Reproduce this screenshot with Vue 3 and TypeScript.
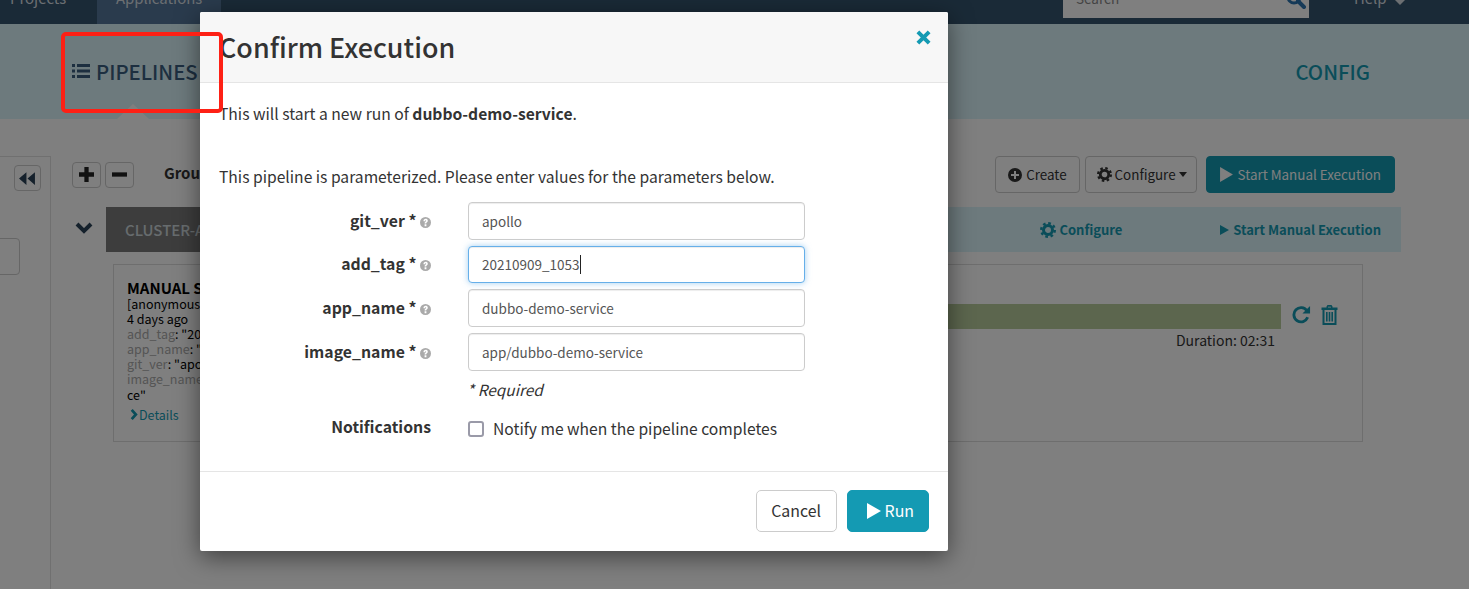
<script setup lang="ts">
interface Param { name: string; value: string; focused?: boolean }
const params: Param[] = [
  { name: 'git_ver', value: 'apollo' },
  { name: 'add_tag', value: '20210909_1053', focused: true },
  { name: 'app_name', value: 'dubbo-demo-service' },
  { name: 'image_name', value: 'app/dubbo-demo-service' },
]
const cardLines: [string, string][] = [
  ['add_tag', ': "20210909_1053"'],
  ['app_name', ': "dubbo-demo-service"'],
  ['git_ver', ': "apollo"'],
  ['image_name', ': "app/dubbo-demo-servi'],
]
</script>

<template>
  <div class="page">
    <header class="topbar">
      <a class="nav-item">Projects</a>
      <a class="nav-item active">Applications</a>
      <div class="spacer"></div>
      <div class="search">
        <span>Search</span>
        <svg class="search-icon" viewBox="0 0 20 20"><circle cx="8" cy="8" r="6" fill="none" stroke="currentColor" stroke-width="3"/><path d="M12 12l6 6" stroke="currentColor" stroke-width="4" stroke-linecap="round"/></svg>
      </div>
      <a class="help">Help <i class="help-caret"></i></a>
    </header>

    <nav class="subnav">
      <a class="tab pipelines">
        <svg class="list-icon" viewBox="0 0 18 14"><path fill="currentColor" d="M0 0h3v3H0zM0 5.500h3v3H0zM0 11h3v3H0zM5 0h13v3H5zM5 5.500h13v3H5zM5 11h13v3H5z"/></svg>
        PIPELINES
      </a>
      <a class="tab config">CONFIG</a>
      <i class="notch"></i>
    </nav>

    <main class="main">
      <aside class="sidebar">
        <button class="icon-btn back">
          <svg viewBox="0 0 16 12" width="17" height="13"><path fill="currentColor" d="M0 6 7 0v12zM8 6l7-6v12z"/></svg>
        </button>
        <div class="side-input"></div>
      </aside>
      <section class="content">
        <div class="toolbar">
          <button class="icon-btn">
            <svg viewBox="0 0 14 14" width="15" height="15"><path fill="currentColor" d="M5 0h4v5h5v4H9v5H5V9H0V5h5z"/></svg>
          </button>
          <button class="icon-btn">
            <svg viewBox="0 0 14 14" width="15" height="15"><path fill="currentColor" d="M0 5h14v4H0z"/></svg>
          </button>
          <span class="group-label">Group by</span>
          <div class="spacer"></div>
          <button class="btn">
            <svg viewBox="0 0 14 14" width="14" height="14"><path fill="currentColor" fill-rule="evenodd" d="M7 0a7 7 0 1 1 0 14A7 7 0 0 1 7 0zM6 3v3H3v2h3v3h2V8h3V6H8V3z"/></svg>
            Create
          </button>
          <button class="btn configure">
            <svg viewBox="0 0 16 16" width="15" height="15"><circle cx="8" cy="8" r="4.500" fill="none" stroke="currentColor" stroke-width="3"/><circle cx="8" cy="8" r="6.800" fill="none" stroke="currentColor" stroke-width="2.400" stroke-dasharray="2.670 2.670"/></svg>
            Configure <i class="caret-down"></i>
          </button>
          <button class="btn primary">
            <svg viewBox="0 0 12 14" width="13" height="15"><path fill="currentColor" d="M0 0l12 7-12 7z"/></svg>
            Start Manual Execution
          </button>
        </div>

        <div class="cluster">
          <svg class="chevron" viewBox="0 0 18 12"><path fill="none" stroke="currentColor" stroke-width="4" d="M2 2l7 7 7-7"/></svg>
          <div class="cluster-band">
            <span class="cluster-label">CLUSTER-APP</span>
            <div class="spacer"></div>
            <a class="band-link cfg">
              <svg viewBox="0 0 16 16" width="16" height="16"><circle cx="8" cy="8" r="4.500" fill="none" stroke="currentColor" stroke-width="3"/><circle cx="8" cy="8" r="6.800" fill="none" stroke="currentColor" stroke-width="2.400" stroke-dasharray="2.670 2.670"/></svg>
              Configure
            </a>
            <a class="band-link">
              <svg viewBox="0 0 9 10" width="9" height="10"><path fill="currentColor" d="M0 0l9 5-9 5z"/></svg>
              Start Manual Execution
            </a>
          </div>
        </div>

        <article class="card">
          <div class="card-info">
            <strong class="card-title">MANUAL START</strong>
            <div>[anonymous]</div>
            <div>4 days ago</div>
            <div v-for="l in cardLines" :key="l[0]"><span class="muted">{{ l[0] }}</span>{{ l[1] }}</div>
            <div>ce"</div>
            <a class="details">
              <svg viewBox="0 0 8 12" width="8" height="11"><path fill="none" stroke="currentColor" stroke-width="3" d="M1.500 1l4.500 5-4.500 5"/></svg>Details
            </a>
          </div>
          <div class="card-run">
            <div class="bar-row">
              <div class="bar"></div>
              <div class="run-actions">
                <svg viewBox="0 0 20 20" width="19" height="19"><path fill="none" stroke="currentColor" stroke-width="3" d="M16.500 13a7.500 7.500 0 1 1-.8-7"/><path fill="currentColor" d="M19 1v8h-8z"/></svg>
                <svg viewBox="0 0 16 20" width="17" height="20"><path fill="currentColor" fill-rule="evenodd" d="M5 1.500 6 0h4l1 1.500v1h5V5h-1v15H1V5H0V2.500h5zM6.500 1.800v.7h3v-.7zM3 5v13h10V5zM4.500 7h1.600v9.500H4.500zM7.200 7h1.600v9.500H7.200zM9.900 7h1.600v9.500H9.900z"/></svg>
              </div>
            </div>
            <div class="duration">Duration: 02:31</div>
          </div>
        </article>
      </section>
    </main>

    <div class="backdrop"></div>

    <div class="modal" role="dialog">
      <div class="modal-header">
        <h3>Confirm Execution</h3>
        <svg class="close" viewBox="0 0 16 16"><path fill="none" stroke="currentColor" stroke-width="4.200" d="M2 2l12 12M14 2 2 14"/></svg>
      </div>
      <div class="modal-body">
        <p class="intro">This will start a new run of <b>dubbo-demo-service</b>.</p>
        <p class="hint">This pipeline is parameterized. Please enter values for the parameters below.</p>
        <div class="params">
          <div v-for="p in params" :key="p.name" class="row">
            <label class="label">{{ p.name }} *
              <svg class="help-dot" viewBox="0 0 12 12"><path fill="currentColor" fill-rule="evenodd" d="M6 0a6 6 0 1 1 0 12A6 6 0 0 1 6 0zM5 8v2h2V8zM3.800 4.500h1.600c0-.5.200-.9.700-.9.400 0 .6.300.6.600 0 .7-1.700 1-1.700 2.800h1.800c0-1.200 1.700-1.400 1.700-3 0-1.300-1.100-2-2.300-2-1.500 0-2.400 1-2.400 2.500z"/></svg>
            </label>
            <div class="field">
              <input class="input" :class="{ focused: p.focused }" :value="p.value" readonly />
              <i v-if="p.focused" class="text-caret"></i>
            </div>
          </div>
        </div>
        <div class="required">* Required</div>
        <div class="row notify">
          <label class="label">Notifications</label>
          <label class="check"><i class="checkbox"></i>Notify me when the pipeline completes</label>
        </div>
      </div>
      <div class="modal-footer">
        <button class="m-btn">Cancel</button>
        <button class="m-btn run">
          <svg viewBox="0 0 14 16" width="14" height="16"><path fill="currentColor" d="M0 0l14 8-14 8z"/></svg>
          Run
        </button>
      </div>
    </div>

    <div class="highlight"></div>
  </div>
</template>

<style>
html, body { margin: 0; background: #fff; }
</style>

<style scoped>
.page {
  position: relative;
  width: 1469px;
  height: 589px;
  overflow: hidden;
  font-family: "Noto Sans CJK SC", "Source Sans Pro", "Liberation Sans", sans-serif;
  font-size: 12.500px;
  line-height: 15.100px;
  color: #333;
  background: #fff;
}
.spacer { flex: 1; }
svg { display: inline-block; flex: none; }

.topbar {
  height: 24px;
  display: flex;
  background: #34546e;
  color: #d8dfe4;
  font-size: 14.900px;
}
.nav-item {
  display: flex;
  align-items: flex-end;
  line-height: 22px;
  box-sizing: border-box;
  width: 97px;
  padding: 0 0 15px 10px;
}
.nav-item.active { width: 124px; padding-left: 19px; background: #54769a; }
.search {
  width: 246px;
  height: 18px;
  background: #fff;
  color: #888;
  position: relative;
  font-size: 13.500px;
  line-height: 20px;
  padding: 0 0 10px 13px;
  box-sizing: border-box;
  margin-right: 45px;
  display: flex;
  align-items: flex-end;
}
.search-icon { position: absolute; right: 3px; top: -11px; width: 20px; height: 20px; color: #2c74b0; }
.help {
  display: flex;
  align-items: flex-end;
  padding-bottom: 15px;
  width: 115px;
  line-height: 22px;
  gap: 8px;
}
.help-caret {
  border-top: 5px solid #d8dfe4;
  border-left: 5px solid transparent;
  border-right: 5px solid transparent;
  margin-bottom: 4px;
  align-self: flex-end;
}

.subnav {
  height: 95px;
  position: relative;
  display: flex;
  justify-content: space-between;
  align-items: flex-start;
  background: #daf4fa;
  padding: 34px 99px 0 72px;
  box-sizing: border-box;
  font-size: 20.300px;
  line-height: 26px;
  font-weight: 500;
}
.tab { display: flex; align-items: center; gap: 6px; }
.pipelines { color: #3a5f80; }
.config { color: #149ab3; }
.list-icon { width: 18px; height: 14px; }
.notch {
  position: absolute;
  left: 117px;
  bottom: 0;
  border-bottom: 15px solid #fff;
  border-left: 16px solid transparent;
  border-right: 16px solid transparent;
}

.main { display: flex; height: 470px; }
.sidebar {
  width: 51px;
  box-sizing: border-box;
  margin-top: 37px;
  border-right: 1px solid #e0e0e0;
  border-top: 1px solid #e0e0e0;
  padding: 8px 0 0 14px;
  position: relative;
}
.side-input {
  position: absolute;
  left: -10px;
  top: 81px;
  width: 30px;
  height: 37px;
  box-sizing: border-box;
  border: 1px solid #ccc;
  border-radius: 4px;
  background: #fff;
}
.icon-btn {
  width: 29px;
  height: 26px;
  padding: 0;
  border: 1px solid #ccc;
  border-radius: 4px;
  background: #fff;
  color: #222;
  display: flex;
  align-items: center;
  justify-content: center;
}
.back { width: 27px; color: #2a4258; }

.content { flex: 1; padding: 37px 68px 0 21px; min-width: 0; }
.toolbar {
  display: flex;
  align-items: center;
  height: 37px;
  gap: 4px;
  font-size: 13.400px;
  padding-right: 6px;
}
.group-label { margin-left: 26px; font-size: 15px; font-weight: 600; margin-top: -3px; }
.btn {
  height: 37px;
  box-sizing: border-box;
  border: 1px solid #ccc;
  border-radius: 4px;
  background: #fff;
  color: #333;
  font: inherit;
  padding: 0 12px;
  display: flex;
  align-items: center;
  gap: 4px;
  margin-left: 1px;
}
.btn.configure { gap: 3px; padding: 0 9px 0 11px; }
.btn.primary {
  background: #149ab3;
  border-color: #149ab3;
  color: #fff;
  margin-left: 5px;
  padding: 0 13px;
  gap: 5px;
}
.caret-down {
  border-top: 5px solid #333;
  border-left: 4.500px solid transparent;
  border-right: 4.500px solid transparent;
}

.cluster { display: flex; align-items: stretch; margin-top: 14px; }
.chevron { width: 18px; height: 12px; color: #2a4258; margin: 15px 13px 0 3px; }
.cluster-band {
  flex: 1;
  height: 45px;
  background: #daf4fa;
  display: flex;
  align-items: center;
  padding-right: 20px;
  font-size: 13px;
  font-weight: 600;
  color: #149ab3;
}
.cluster-label {
  align-self: stretch;
  display: flex;
  align-items: center;
  padding: 0 50px 0 19px;
  background: #7b7b7b;
  color: #cfd8dc;
  font-size: 15px;
  font-weight: 500;
}
.band-link { display: flex; align-items: center; gap: 4px; }
.band-link.cfg { margin-right: 98px; gap: 3px; }

.card {
  margin: 12px 38px 0 41px;
  height: 178px;
  box-sizing: border-box;
  border: 1px solid #ddd;
  display: flex;
  padding: 14px 0 0 13px;
}
.card-info { width: 180px; color: #000; white-space: nowrap; flex: none; }
.card-title { display: block; font-size: 15px; line-height: 17px; font-weight: 600; }
.muted { color: #aaa; }
.details { display: flex; align-items: center; gap: 1px; margin: 5px 0 0 3px; color: #149ab3; }
.card-run { flex: 1; margin-top: 25px; }
.bar-row { display: flex; }
.bar { flex: 1; height: 25px; background: #b8cc9c; }
.run-actions { width: 81px; box-sizing: border-box; display: flex; gap: 10px; align-items: flex-start; color: #149ab3; padding: 1px 0 0 11px; }
.duration { margin: 4px 87px 0 0; text-align: right; color: #333; font-size: 14px; }

.backdrop {
  position: absolute;
  inset: 0;
  background: rgba(0, 0, 0, .5);
}

.modal {
  position: absolute;
  left: 200px;
  top: 12px;
  width: 748px;
  height: 539px;
  background: #fff;
  border-radius: 2px;
  box-shadow: 0 6px 24px rgba(0, 0, 0, .5);
  display: flex;
  flex-direction: column;
  font-size: 15.650px;
  line-height: 22px;
}
.modal-header {
  height: 71px;
  flex: none;
  box-sizing: border-box;
  background: #f7f7f7;
  border-bottom: 1px solid #e5e5e5;
  padding: 0 17px 0 19px;
  display: flex;
  align-items: center;
  justify-content: space-between;
  border-radius: 2px 2px 0 0;
}
.modal-header h3 { margin: 0; font-size: 26.900px; font-weight: 500; line-height: 36px; }
.close { width: 15px; height: 15px; color: #149ab3; align-self: flex-start; margin: 18px 0 0; }
.modal-body { flex: 1; padding: 0 19px; }
.intro { margin: 20px 0 0; }
.intro b { font-weight: 700; }
.hint { margin: 41px 0 0; }
.params { margin-top: 14px; display: flex; flex-direction: column; gap: 6.200px; }
.row { display: flex; align-items: center; }
.label {
  width: 212px;
  text-align: right;
  font-size: 15.800px;
  font-weight: 700;
  flex: none;
  display: block;
  margin-top: -.5px;
}
.help-dot { width: 11px; height: 11px; color: #aaa; margin-left: 0; vertical-align: -1px; }
.field { position: relative; margin-left: 37px; }
.input {
  display: block;
  width: 337px;
  height: 37.500px;
  box-sizing: border-box;
  padding: 0 13px;
  border: 1px solid #ccc;
  border-radius: 4px;
  font: inherit;
  font-size: 13.500px;
  color: #555;
  outline: none;
  box-shadow: inset 0 1px 1px rgba(0, 0, 0, .075);
}
.input.focused {
  border-color: #66afe9;
  box-shadow: inset 0 1px 1px rgba(0, 0, 0, .075), 0 0 6px rgba(102, 175, 233, .6);
}
.text-caret { position: absolute; left: 112px; top: 9px; width: 1px; height: 19px; background: #222; }
.required { margin: 7px 0 0 248px; font-style: italic; font-size: 15.400px; }
.notify { margin-top: 18px; }
.notify .label { margin-top: -4px; }
.check { display: flex; align-items: center; margin-left: 37px; }
.checkbox {
  width: 16px;
  height: 16px;
  box-sizing: border-box;
  border: 2px solid #9a9aa8;
  border-radius: 3px;
  margin-right: 9px;
  background: #fff;
}
.modal-footer {
  height: 80px;
  flex: none;
  box-sizing: border-box;
  border-top: 1px solid #e5e5e5;
  padding: 18px 19px 0 0;
  display: flex;
  justify-content: flex-end;
  align-items: flex-start;
  gap: 10px;
}
.m-btn {
  height: 42px;
  box-sizing: border-box;
  border: 1px solid #ccc;
  border-radius: 5px;
  background: #fff;
  color: #333;
  font: inherit;
  font-size: 15.900px;
  padding: 0 14.500px;
  display: flex;
  align-items: center;
}
.m-btn.run { background: #149ab3; border-color: #149ab3; color: #fff; gap: 4px; padding: 0 14px 0 19px; }

.highlight {
  position: absolute;
  left: 61px;
  top: 32px;
  width: 162px;
  height: 81px;
  box-sizing: border-box;
  border: 4px solid #fe2015;
  border-radius: 5px;
}
</style>
